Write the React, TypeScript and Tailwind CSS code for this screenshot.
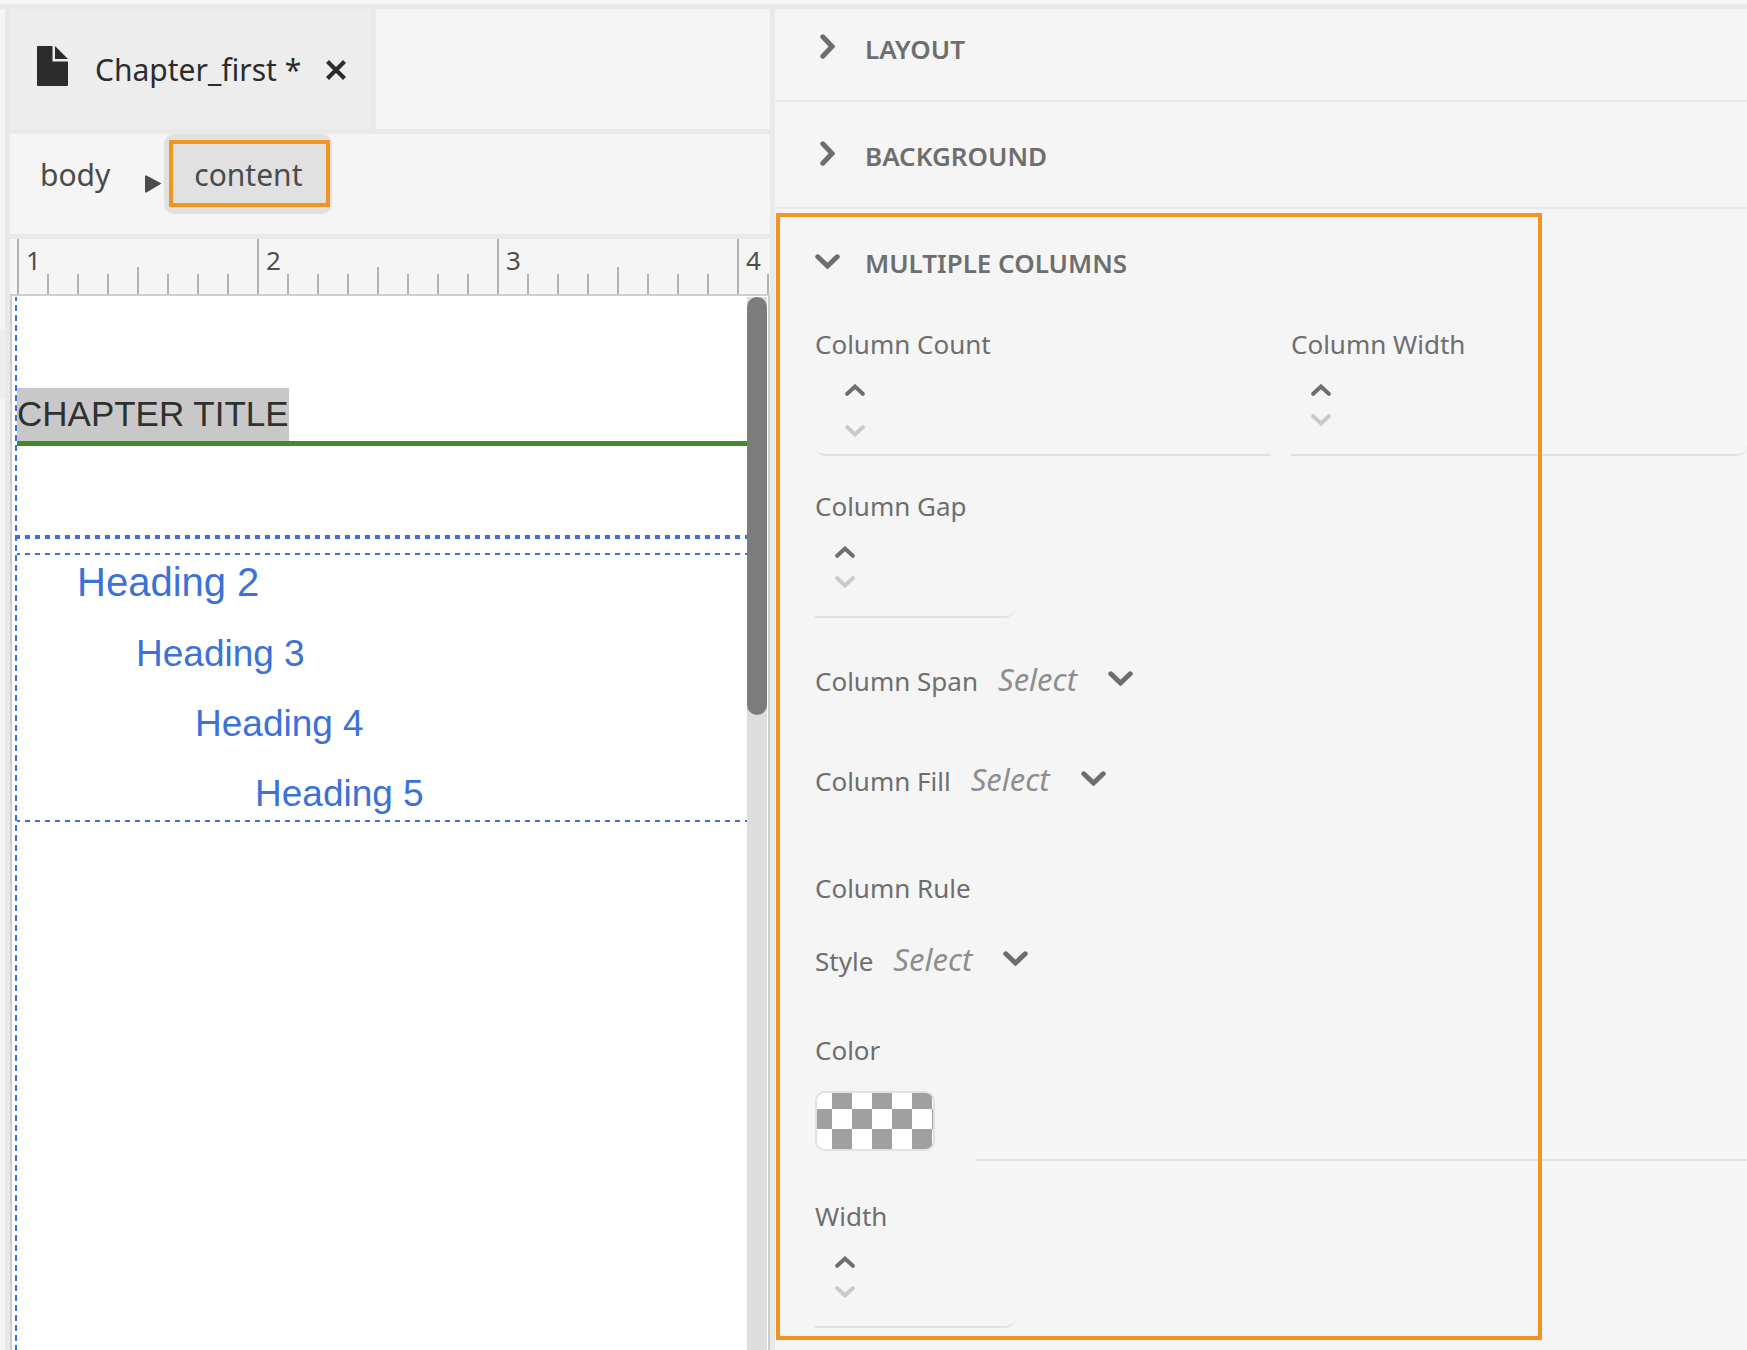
import React from "react";

function Chevron({ direction }: { direction: "down" | "right" }) {
  const down = direction === "down";
  return (
    <svg
      width={down ? 25 : 15}
      height={down ? 15 : 25}
      viewBox={down ? "0 0 25 15" : "0 0 15 25"}
      fill="none"
      stroke="#6e6e6e"
      strokeWidth="5"
      strokeLinecap="round"
      aria-hidden="true"
    >
      <path d={down ? "M2.8 2.8 L12.5 12 L22.2 2.8" : "M2.8 2.8 L12 12.5 L2.8 22.2"} />
    </svg>
  );
}

function StepArrow({ up }: { up: boolean }) {
  return (
    <svg width="20" height="12" viewBox="0 0 20 12" fill="none" strokeWidth="4" strokeLinecap="round" stroke={up ? "#6e6e6e" : "#cacaca"} aria-hidden="true">
      <path d={up ? "M2.2 9.8 L10 2.6 L17.8 9.8" : "M2.2 2.2 L10 9.4 L17.8 2.2"} />
    </svg>
  );
}

function Label({ htmlFor, children }: { htmlFor: string; children: React.ReactNode }) {
  return (
    <label htmlFor={htmlFor} className="block pt-0.5 text-[26px] leading-[34px] whitespace-nowrap">
      {children}
    </label>
  );
}

function Stepper({ id, label, fieldClass, spinClass }: { id: string; label: string; fieldClass: string; spinClass: string }) {
  return (
    <div>
      <Label htmlFor={id}>{label}</Label>
      <div className={`flex h-[95px] border-b-2 border-[#e1e1e1] pt-3.5 ${fieldClass}`}>
        <div className={`flex flex-col ${spinClass}`}>
          <button type="button" aria-label={`Increase ${label}`} className="flex h-[30px] w-5 items-center justify-center">
            <StepArrow up />
          </button>
          <button type="button" aria-label={`Decrease ${label}`} className="flex h-[30px] w-5 items-center justify-center">
            <StepArrow up={false} />
          </button>
        </div>
        <input id={id} type="text" className="min-w-0 flex-1 bg-transparent px-3 text-[26px] outline-none" />
      </div>
    </div>
  );
}

function SelectRow({ id, label, className }: { id: string; label: string; className: string }) {
  return (
    <div className={`flex h-9 items-center gap-5 ${className}`}>
      <Label htmlFor={id}>{label}</Label>
      <div className="relative flex h-9 items-center pb-0.5">
        <select id={id} className="h-9 w-[135px] appearance-none bg-transparent text-[31px] leading-9 text-[#8e8e8e] italic outline-none">
          <option>Select</option>
        </select>
        <span className="pointer-events-none absolute right-0 pb-0.5">
          <Chevron direction="down" />
        </span>
      </div>
    </div>
  );
}

function SectionHeader({ title, open = false }: { title: string; open?: boolean }) {
  return (
    <button type="button" aria-expanded={open} className="flex h-9 items-center pl-10 text-[26px] leading-9 font-semibold">
      <span className="flex w-[50px] items-center pb-1">
        <span className="flex w-[25px] justify-center">
          <Chevron direction={open ? "down" : "right"} />
        </span>
      </span>
      {title}
    </button>
  );
}

function Ruler() {
  return (
    <div className="flex h-[57px] overflow-hidden border-b-2 border-[#cdcdcd] pl-[7px]">
      {[1, 2, 3, 4].map((inch) => (
        <div key={inch} className="relative flex w-60 shrink-0 items-end">
          {[0, 1, 2, 3, 4, 5, 6, 7].map((tick) => (
            <span
              key={tick}
              className={`mr-7 w-0.5 shrink-0 bg-[#b1b1b1] ${tick === 0 ? "h-[55px]" : tick === 4 ? "h-[27px]" : "h-5"}`}
            />
          ))}
          <span className="absolute top-[3px] left-[9px] text-[26px] leading-9 text-[#4f4f4f]">{inch}</span>
        </div>
      ))}
    </div>
  );
}

function Canvas() {
  return (
    <div className="flex flex-1 border-x-2 border-[#cdcdcd] bg-white pr-px pl-[3px] font-['Liberation_Sans',sans-serif]">
      <div className="mt-px w-0.5 bg-[repeating-linear-gradient(180deg,#3f6fdf_0_4px,transparent_4px_8px,#3f6fdf_8px_10px)]" />
      <div className="min-w-0 flex-1 overflow-hidden">
        <h1 className="mt-[92px] border-b-[5px] border-[#438a2b] text-[35px] leading-[51px] text-[#303030]">
          <span className="inline-block bg-[#c8c8c8] pb-0.5">CHAPTER TITLE</span>
        </h1>
        <div className="mt-[89px] h-1 bg-[repeating-linear-gradient(90deg,#3f6fdf_0_3px,transparent_3px_8px,#3f6fdf_8px_10px)]" />
        <div className="mt-3.5 h-0.5 bg-[repeating-linear-gradient(90deg,#3f6fdf_0_3px,transparent_3px_8px,#3f6fdf_8px_10px)]" />
        <div className="flex flex-col gap-5 pb-px text-[37px] leading-[50px] text-[#3c72d6]">
          <h2 className="pl-[60px] text-[40px] leading-[54px]">Heading 2</h2>
          <h3 className="pl-[119px]">Heading 3</h3>
          <h4 className="pl-[178px]">Heading 4</h4>
          <h5 className="pl-[238px]">Heading 5</h5>
        </div>
        <div className="h-0.5 bg-[repeating-linear-gradient(90deg,#3f6fdf_0_3px,transparent_3px_8px,#3f6fdf_8px_10px)]" />
      </div>
      <div className="mt-px w-5 bg-[#dddddd]">
        <div className="h-[418px] rounded-full bg-[#7c7c7c]" />
      </div>
    </div>
  );
}

function Editor() {
  return (
    <main className="flex min-w-0 flex-col">
      <div className="flex h-[125px] border-b-[5px] border-[#e9e9e9]">
        <div className="flex items-center border-r-[5px] border-[#e9e9e9] bg-[#ededed] pr-[25px] pl-[27px] text-[#2c2c2c]">
          <svg width="31" height="40" viewBox="0 0 31 40" fill="currentColor" className="mb-1.5" aria-hidden="true">
            <path d="M0 1 Q0 0 1 0 H15.5 V15.5 H31 V39 Q31 40 30 40 H1 Q0 40 0 39 Z" />
            <path d="M18 0 L31 13 H18 Z" />
          </svg>
          <span className="ml-[27px] pt-0.5 text-[30px] leading-10 whitespace-nowrap">Chapter_first *</span>
          <button type="button" aria-label="Close tab" className="ml-[25px] flex h-8 items-center pt-0.5">
            <svg width="20" height="20" viewBox="0 0 20 20" fill="none" stroke="currentColor" strokeWidth="4.2" aria-hidden="true">
              <path d="M1.5 1.5 L18.5 18.5 M18.5 1.5 L1.5 18.5" />
            </svg>
          </button>
        </div>
      </div>
      <nav aria-label="Element path" className="flex h-[105px] items-start border-b-[5px] border-[#e9e9e9] text-[30px] leading-10 text-[#4b4b4b]">
        <button type="button" className="h-20 pt-0.5 pl-[30px]">body</button>
        <svg width="17" height="18" viewBox="0 0 17 18" fill="currentColor" className="mt-[41px] mr-0.5 ml-[35px] shrink-0" aria-hidden="true">
          <path d="M0 1.5 Q0 0 1.5 0.6 L16.5 8.5 L1.5 17.4 Q0 18 0 16.5 Z" />
        </svg>
        <button type="button" className="relative h-20 w-[168px] rounded-[10px] bg-[#e1e1e1] pt-0.5">
          content
          <span className="pointer-events-none absolute top-1.5 right-0.5 bottom-[7px] left-[5px] border-4 border-[#f29423]" />
        </button>
      </nav>
      <Ruler />
      <Canvas />
    </main>
  );
}

function Properties() {
  return (
    <aside className="min-w-0 overflow-hidden text-[#6e6e6e]">
      <div className="flex h-[93px] items-center border-b-2 border-[#e9e9e9] pb-3">
        <SectionHeader title="LAYOUT" />
      </div>
      <div className="flex h-[107px] items-center border-b-2 border-[#e9e9e9] pt-0.5">
        <SectionHeader title="BACKGROUND" />
      </div>
      <section className="relative pt-9 pb-3">
        <SectionHeader title="MULTIPLE COLUMNS" open />
        <div className="pl-10">
          <div className="mt-11 grid grid-cols-2 gap-5">
            <Stepper id="column-count" label="Column Count" fieldClass="rounded-bl-[10px]" spinClass="gap-[11px] pl-[30px]" />
            <Stepper id="column-width" label="Column Width" fieldClass="rounded-br-[10px]" spinClass="pl-5" />
          </div>
          <div className="mt-[31px] w-[200px]">
            <Stepper id="column-gap" label="Column Gap" fieldClass="rounded-br-[10px]" spinClass="pl-5" />
          </div>
          <SelectRow id="column-span" label="Column Span" className="mt-11" />
          <SelectRow id="column-fill" label="Column Fill" className="mt-16" />
          <h3 className="mt-[71px] pt-0.5 text-[26px] leading-[34px]">Column Rule</h3>
          <SelectRow id="rule-style" label="Style" className="mt-[37px]" />
          <div className="mt-[53px]">
            <Label htmlFor="rule-color">Color</Label>
            <div className="flex h-[94px] gap-10 pt-6">
              <button
                type="button"
                aria-label="Pick color"
                className="h-[60px] w-[120px] shrink-0 rounded-[10px] border-2 border-[#e1e1e1] bg-[repeating-conic-gradient(#a0a0a0_0_25%,#ffffff_0_50%)] bg-[length:40px_40px] bg-[position:-5px_-4px]"
              />
              <input id="rule-color" type="text" className="min-w-0 flex-1 border-b-2 border-[#e1e1e1] bg-transparent text-[26px] outline-none" />
            </div>
          </div>
          <div className="mt-9 w-[200px]">
            <Stepper id="rule-width" label="Width" fieldClass="rounded-br-[10px]" spinClass="pl-5" />
          </div>
        </div>
        <div className="pointer-events-none absolute top-1 right-[205px] bottom-0 left-px border-4 border-[#f29423]" />
      </section>
    </aside>
  );
}

export default function App() {
  return (
    <div className="flex min-h-screen flex-col bg-[#f5f5f5] pt-1 font-['Noto_Sans',sans-serif]">
      <div className="h-[5px] bg-[#e9e9e9]" />
      <div className="grid flex-1 grid-cols-[5px_5px_760fr_5px_972fr]">
        <div className="pt-80">
          <div className="h-[70px] bg-[#ededed]" />
        </div>
        <div className="bg-[#e9e9e9]" />
        <Editor />
        <div className="bg-[#e9e9e9]" />
        <Properties />
      </div>
    </div>
  );
}
